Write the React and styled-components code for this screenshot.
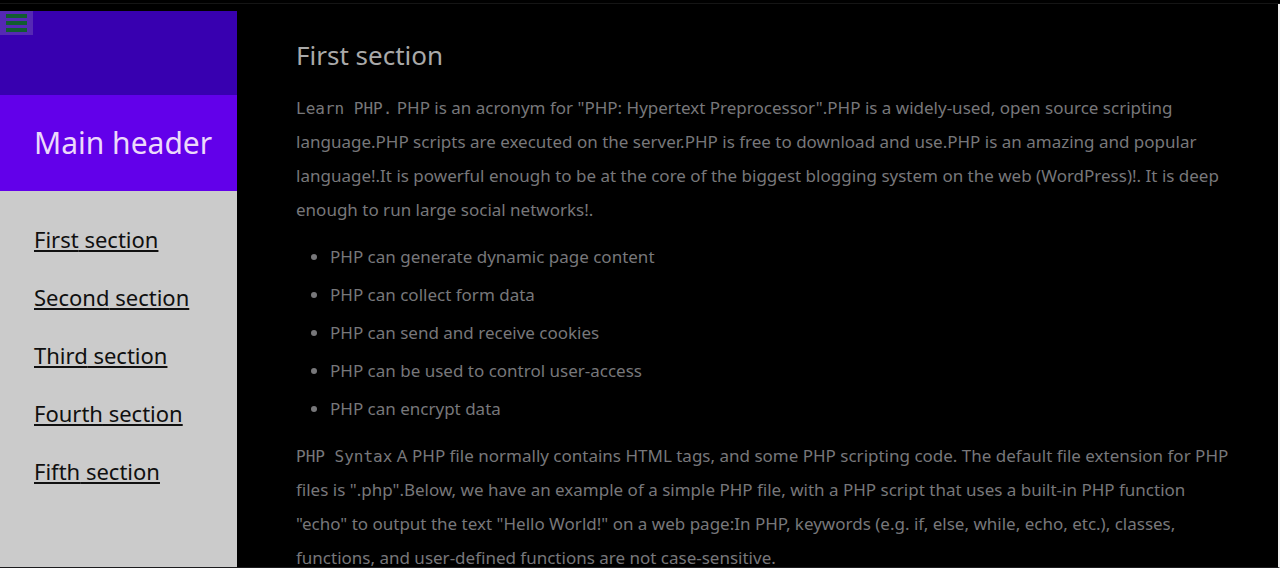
import React from "react";
import styled, { createGlobalStyle } from "styled-components";

const GlobalStyle = createGlobalStyle`
  *, *::before, *::after { box-sizing: border-box; }
  body {
    margin: 0;
    background: #000;
    font-family: "Noto Sans", "Open Sans", sans-serif;
  }
`;

const Page = styled.div`
  display: flex;
  flex-direction: column;
  height: 100vh;
  overflow: hidden;
  background: #000;
`;

const TopBar = styled.div`
  flex: none;
  height: 4px;
  border-bottom: 1px solid #151515;
`;

const Body = styled.div`
  flex: 1;
  min-height: 0;
  display: flex;
  border-right: 2px solid #f0f0f0;
  border-bottom: 1px solid #1c1c1e;
`;

const Sidebar = styled.aside`
  flex: none;
  width: 237px;
  margin-top: 7px;
  display: flex;
  flex-direction: column;
  background: #cbcbcb;
`;

const MenuBar = styled.div`
  height: 84px;
  background: #3800b0;
`;

const MenuButton = styled.button`
  display: flex;
  align-items: center;
  justify-content: center;
  width: 33px;
  height: 24px;
  padding: 0;
  border: 0;
  background: #5529b4;
  cursor: pointer;
`;

const Banner = styled.header`
  height: 96px;
  display: flex;
  align-items: center;
  padding: 0 0 0 34px;
  background: #6200ea;
`;

const Title = styled.h1`
  margin: 0;
  font-size: 30px;
  font-weight: 400;
  line-height: 40px;
  white-space: nowrap;
  color: #ecd9fb;
`;

const Nav = styled.nav`
  display: flex;
  flex-direction: column;
  align-items: flex-start;
  gap: 26px;
  padding: 32px 0 0 34px;
`;

const NavLink = styled.a`
  font-size: 22px;
  line-height: 32px;
  color: #101010;
  text-decoration: underline;
  text-decoration-thickness: 2px;
  text-underline-offset: 2px;
`;

const Content = styled.main`
  flex: 1;
  min-width: 0;
  overflow: hidden;
  padding: 31px 44px 0 59px;
`;

const Heading = styled.h2`
  margin: 0 0 16px;
  font-size: 26px;
  font-weight: 400;
  line-height: 40px;
  color: #a9a9a9;
`;

const Paragraph = styled.p`
  margin: 0;
  font-size: 17px;
  line-height: 34px;
  color: #77777a;
`;

const Code = styled.code`
  font-family: "DejaVu Sans Mono", monospace;
  font-size: 16px;
  line-height: 1;
`;

const List = styled.ul`
  display: flex;
  flex-direction: column;
  gap: 4px;
  margin: 13px 0;
  padding: 0 0 0 34px;
  font-size: 17px;
  line-height: 34px;
  color: #77777a;
`;

const sections = ["First", "Second", "Third", "Fourth", "Fifth"];

const features = [
  "PHP can generate dynamic page content",
  "PHP can collect form data",
  "PHP can send and receive cookies",
  "PHP can be used to control user-access",
  "PHP can encrypt data",
];

export default function App() {
  return (
    <Page>
      <GlobalStyle />
      <TopBar />
      <Body>
        <Sidebar>
          <MenuBar>
            <MenuButton aria-label="Toggle menu">
              <svg width="21" height="18" viewBox="0 0 21 18" aria-hidden="true">
                <path d="M0 2h21M0 9h21M0 16h21" stroke="#115c30" strokeWidth="4" />
              </svg>
            </MenuButton>
          </MenuBar>
          <Banner>
            <Title>Main header</Title>
          </Banner>
          <Nav>
            {sections.map((name) => (
              <NavLink key={name} href={`#${name.toLowerCase()}`}>
                {name} section
              </NavLink>
            ))}
          </Nav>
        </Sidebar>
        <Content>
          <Heading id="first">First section</Heading>
          <Paragraph>
            <Code>Learn PHP.</Code> PHP is an acronym for "PHP: Hypertext
            Preprocessor".PHP is a widely-used, open source scripting
            language.PHP scripts are executed on the server.PHP is free to
            download and use.PHP is an amazing and popular language!.It is
            powerful enough to be at the core of the biggest blogging system on
            the web (WordPress)!. It is deep enough to run large social
            networks!.
          </Paragraph>
          <List>
            {features.map((text) => (
              <li key={text}>{text}</li>
            ))}
          </List>
          <Paragraph>
            <Code>PHP Syntax</Code> A PHP file normally contains HTML tags, and
            some PHP scripting code. The default file extension for PHP files is
            ".php".Below, we have an example of a simple PHP file, with a PHP
            script that uses a built-in PHP function "echo" to output the text
            "Hello World!" on a web page:In PHP, keywords (e.g. if, else, while,
            echo, etc.), classes, functions, and user-defined functions are not
            case-sensitive.
          </Paragraph>
        </Content>
      </Body>
    </Page>
  );
}
